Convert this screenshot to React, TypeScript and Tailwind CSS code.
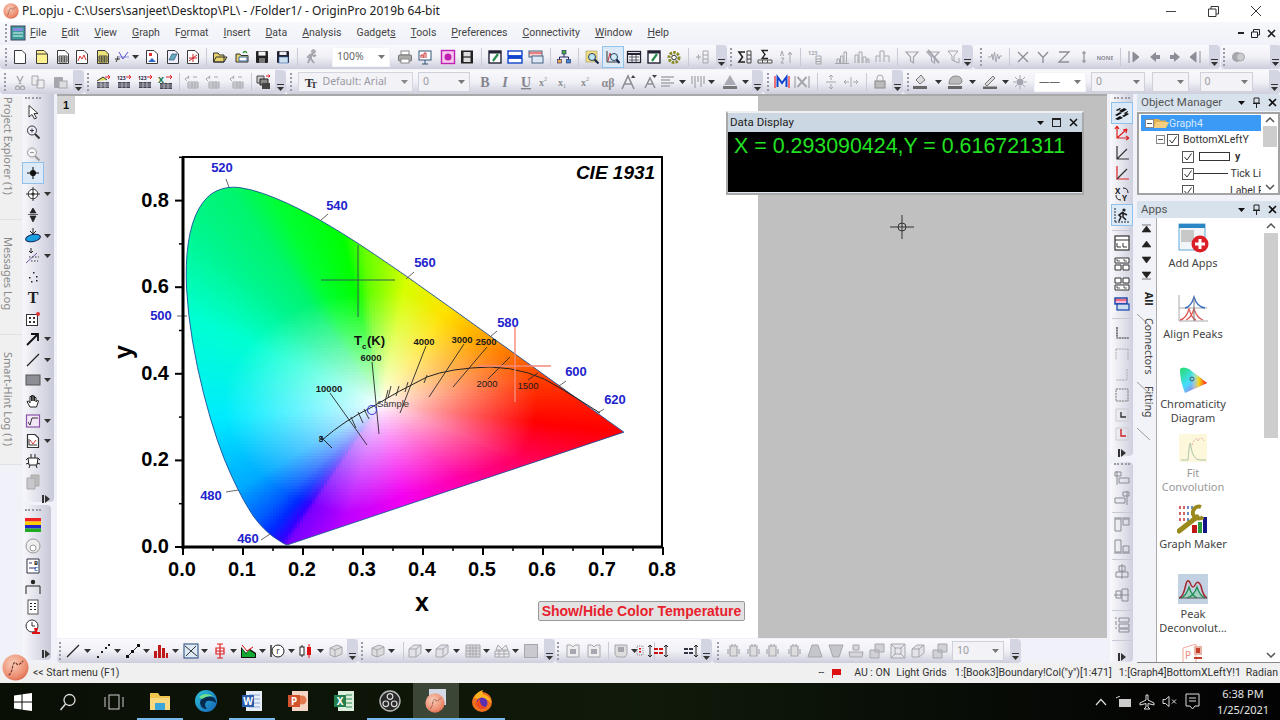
import { ReactNode, useMemo } from "react";

// spectral locus of the CIE 1931 diagram
const LOCUS: [number, number][] = [
  [0.1741, 0.005], [0.1714, 0.0051], [0.1644, 0.0109], [0.1566, 0.0177], [0.144, 0.0297], [0.1241, 0.0578],
  [0.1096, 0.0868], [0.0913, 0.1327], [0.0687, 0.2007], [0.0454, 0.295], [0.0235, 0.4127], [0.0082, 0.5384],
  [0.0039, 0.6548], [0.0139, 0.7502], [0.0389, 0.812], [0.0743, 0.8338], [0.1142, 0.8262], [0.1547, 0.8059],
  [0.1929, 0.7816], [0.2296, 0.7543], [0.2658, 0.7243], [0.3016, 0.6923], [0.3373, 0.6589], [0.3731, 0.6245],
  [0.4087, 0.5896], [0.4441, 0.5547], [0.4788, 0.5202], [0.5125, 0.4866], [0.5448, 0.4544], [0.5752, 0.4242],
  [0.6029, 0.3965], [0.627, 0.3725], [0.6658, 0.334], [0.6915, 0.3083], [0.7079, 0.292], [0.719, 0.2809], [0.7347, 0.2653],
];
const px = (x: number) => 183 + x * 600;
const py = (y: number) => 547 - y * 433;

function inPoly(x: number, y: number, poly: [number, number][]) {
  let hit = false;
  for (let i = 0, j = poly.length - 1; i < poly.length; j = i++) {
    const [xi, yi] = poly[i];
    const [xj, yj] = poly[j];
    if (yi > y !== yj > y && x < ((xj - xi) * (y - yi)) / (yj - yi) + xi) hit = !hit;
  }
  return hit;
}

// rim colours read off the picture, looked up by the angle round the white point
const RIM = ([
  [0.7347, 0.2653, 255, 0, 0], [0.627, 0.3725, 255, 50, 0], [0.5125, 0.4866, 255, 160, 0], [0.4441, 0.5547, 255, 225, 0],
  [0.3731, 0.6245, 215, 255, 0], [0.3016, 0.6923, 100, 255, 0], [0.2658, 0.7243, 0, 255, 0], [0.1547, 0.8059, 0, 255, 50],
  [0.0743, 0.8338, 0, 245, 110], [0.0139, 0.7502, 0, 245, 140], [0.0039, 0.6548, 0, 250, 170], [0.0082, 0.5384, 0, 255, 210],
  [0.0454, 0.295, 0, 235, 255], [0.0913, 0.1327, 0, 170, 255], [0.1241, 0.0578, 0, 90, 255], [0.144, 0.0297, 0, 40, 255],
  [0.1644, 0.0109, 50, 0, 255], [0.1741, 0.005, 120, 0, 255], [0.27, 0.05, 190, 0, 255], [0.37, 0.096, 245, 0, 240],
  [0.47, 0.142, 255, 0, 170], [0.57, 0.189, 255, 0, 100], [0.66, 0.231, 255, 0, 40],
] as number[][])
  .map(([x, y, r, g, b]) => ({ a: (Math.atan2(y - 0.33, x - 0.33) + Math.PI * 2) % (Math.PI * 2), d: Math.hypot(x - 0.33, y - 0.33), c: [r, g, b] }))
  .sort((p, q) => p.a - q.a);

function shoeColor(x: number, y: number) {
  const a = (Math.atan2(y - 0.33, x - 0.33) + Math.PI * 2) % (Math.PI * 2);
  let i = RIM.findIndex((p) => p.a > a);
  if (i < 0) i = 0;
  const hi = RIM[i];
  const lo = RIM[(i - 1 + RIM.length) % RIM.length];
  const span = (hi.a - lo.a + Math.PI * 2) % (Math.PI * 2);
  const f = ((a - lo.a + Math.PI * 2) % (Math.PI * 2)) / span;
  const R = lo.d + (hi.d - lo.d) * f;
  const s = Math.min(1, Math.pow(Math.hypot(x - 0.33, y - 0.33) / Math.min(R * 0.9, 0.26), 0.85));
  const [r, g, b] = lo.c.map((v, n) => {
    const m = v + (hi.c[n] - v) * f;
    return Math.round(255 + (m - 255) * s);
  });
  return `rgb(${r},${g},${b})`;
}

function Horseshoe() {
  const cells = useMemo(() => {
    const out: { x: number; y: number; c: string }[] = [];
    const poly = LOCUS.map(([a, b]): [number, number] => [px(a), py(b)]);
    const step = 3;
    for (let sx = 180; sx < 628; sx += step) {
      for (let sy = 180; sy < 549; sy += step) {
        const near = [[1.5, 1.5], [5, 1.5], [-2, 1.5], [1.5, 5], [1.5, -2]].some(([u, v]) => inPoly(sx + u, sy + v, poly));
        if (near) out.push({ x: sx, y: sy, c: shoeColor((sx + 1.5 - 183) / 600, (547 - sy - 1.5) / 433) });
      }
    }
    return out;
  }, []);
  const pts = LOCUS.map(([a, b]) => [px(a), py(b)]);
  let d = `M${pts[0][0]} ${pts[0][1]}`;
  for (let i = 1; i < pts.length - 1; i++) {
    d += ` Q${pts[i][0].toFixed(1)} ${pts[i][1].toFixed(1)} ${((pts[i][0] + pts[i + 1][0]) / 2).toFixed(1)} ${((pts[i][1] + pts[i + 1][1]) / 2).toFixed(1)}`;
  }
  d += ` L${pts[pts.length - 1][0]} ${pts[pts.length - 1][1]}Z`;
  return (
    <>
      <clipPath id="shoe"><path d={d} /></clipPath>
      <g clipPath="url(#shoe)" shapeRendering="crispEdges">
        {cells.map((c) => <rect key={`${c.x}-${c.y}`} x={c.x} y={c.y} width={3.4} height={3.4} fill={c.c} />)}
      </g>
      <path d={d} fill="none" stroke="#1c4f9a" strokeWidth={0.9} />
    </>
  );
}

function Chart() {
  const waves: [string, number, number, number, number, number, number][] = [
    ["520", 222, 172, 226, 179, 229, 187],
    ["540", 337, 210, 328, 214, 321, 220],
    ["560", 425, 267, 414, 272, 406, 279],
    ["580", 508, 327, 497, 331, 490, 337],
    ["600", 576, 376, 566, 381, 559, 386],
    ["620", 615, 404, 604, 409, 596, 414],
    ["500", 161, 320, 177, 316, 187, 316],
    ["480", 211, 500, 226, 492, 238, 490],
    ["460", 248, 543, 261, 540, 270, 534],
  ];
  const iso: [number, number, number, number][] = [
    [330, 393, 367, 445], [372, 362, 379, 434], [426, 346, 400, 413], [464, 344, 429, 397], [487, 347, 453, 387], [510, 357, 488, 379], [538, 373, 528, 380],
    [351, 417, 356, 428], [358, 412, 363, 423], [364, 409, 369, 419], [388, 390, 385, 402], [391, 386, 388, 398], [399, 386, 396, 396], [408, 382, 405, 392], [427, 375, 424, 383],
  ];
  const xTicks = [0, 0.1, 0.2, 0.3, 0.4, 0.5, 0.6, 0.7, 0.8];
  const yTicks = [0, 0.2, 0.4, 0.6, 0.8];
  return (
    <svg viewBox="57 96 701 542" className="h-full w-full" fontFamily="'Liberation Sans', Arial, sans-serif">
      <Horseshoe />
      <path d="M322 440 Q345 420 372 407 Q400 390 427 377 Q450 368 490 367 Q530 368 560 388 Q580 400 600 413" fill="none" stroke="#222" strokeWidth={1} />
      <path d="M320 436 L332 448" stroke="#222" strokeWidth={1} />
      {iso.map(([a, b, c, e]) => <line key={`${a}${b}`} x1={a} y1={b} x2={c} y2={e} stroke="#2a2a2a" strokeWidth={0.9} />)}
      {/* cursors */}
      <path d="M358 245V317M321 280H395" stroke="#2f5a50" strokeWidth={1} />
      <path d="M515 326V402M478 366H551" stroke="#f58a7a" strokeWidth={1.4} />
      <circle cx={372} cy={410} r={4.5} fill="none" stroke="#3c3ccf" strokeWidth={1.2} />
      {waves.map(([t, x, y, a, b, c, e]) => (
        <g key={t}>
          <line x1={a} y1={b} x2={c} y2={e} stroke="#555" strokeWidth={0.9} />
          <text x={x} y={y} textAnchor="middle" fontSize={13} fontWeight={700} fill="#2222cc">{t}</text>
        </g>
      ))}
      <text x={354} y={345} fontSize={13} fontWeight={700} fill="#111">T</text>
      <text x={362} y={349} fontSize={8} fontWeight={700} fill="#111">c</text>
      <text x={367} y={345} fontSize={13} fontWeight={700} fill="#111">(K)</text>
      {[["6000", 371, 361], ["10000", 329, 392], ["4000", 424, 345], ["3000", 462, 343], ["2500", 486, 345], ["2000", 487, 387], ["1500", 528, 389]].map(([t, x, y]) => (
        <text key={t as string} x={x} y={y} textAnchor="middle" fontSize={9.5} fontWeight={t === "2000" || t === "1500" ? 400 : 700} fill="#1a1a1a">{t}</text>
      ))}
      <text x={393} y={407} textAnchor="middle" fontSize={9.5} fill="#333">Sample</text>
      <text transform="translate(318 439) rotate(90)" textAnchor="middle" fontSize={10} fontWeight={700} fill="#111">∞</text>

      <path d="M183 547V157H662V547" fill="none" stroke="#000" strokeWidth={2} />
      <path d="M181.5 547H663M183 157V549" fill="none" stroke="#000" strokeWidth={3} />
      {xTicks.map((v) => (
        <g key={v}>
          <line x1={px(v)} y1={547} x2={px(v)} y2={555} stroke="#000" strokeWidth={2} />
          {v < 0.8 && <line x1={px(v + 0.05)} y1={547} x2={px(v + 0.05)} y2={551} stroke="#000" strokeWidth={1.5} />}
          <text x={px(v) - 1} y={576} textAnchor="middle" fontSize={20} fontWeight={700} fill="#000">{v.toFixed(1)}</text>
        </g>
      ))}
      {yTicks.map((v) => (
        <g key={v}>
          <line x1={175} y1={py(v)} x2={183} y2={py(v)} stroke="#000" strokeWidth={2} />
          <line x1={179} y1={py(v + 0.1)} x2={183} y2={py(v + 0.1)} stroke="#000" strokeWidth={1.5} />
          <text x={169} y={py(v) + 6} textAnchor="end" fontSize={20} fontWeight={700} fill="#000">{v.toFixed(1)}</text>
        </g>
      ))}
      <text x={422} y={611} textAnchor="middle" fontSize={25} fontWeight={700} fill="#000">x</text>
      <text transform="translate(132 352) rotate(-90)" textAnchor="middle" fontSize={25} fontWeight={700} fill="#000">y</text>
      <text x={615.5} y={179} textAnchor="middle" fontSize={19} fontWeight={700} fontStyle="italic" fill="#000">CIE 1931</text>
    </svg>
  );
}

const GR = "#a6a7ae";
const DK = "#3a3a3a";

function glyph(k: string): ReactNode {
  const page = (fill = "#fff", s = DK) => <path d="M2.5 1.5H10L13.5 5V14.5H2.5Z" fill={fill} stroke={s} />;
  const grid = (c = DK) => <path d="M4 7H12V13H4ZM4 9H12M4 11H12M6.7 7V13M9.3 7V13" fill="none" stroke={c} strokeWidth={0.9} />;
  switch (k) {
    case "doc": return page();
    case "fold": return <>{page("#fff090")}<path d="M3 5H13" stroke={DK} /></>;
    case "grid": return <>{page()}{grid()}</>;
    case "gdoc": return <>{page()}<path d="M4 12L6 7L8 10L10 6L12 11" fill="none" stroke="#d33" /></>;
    case "ygrid": return <>{page("#eee27a")}{grid()}</>;
    case "fx": return <><path d="M2 13Q4 10 4 7M1 10H6" stroke={DK} fill="none" /><path d="M5 3L9 10L14 3" stroke="#55c" fill="none" /><path d="M5 8H15" stroke="#55c" strokeWidth={0.6} /></>;
    case "cdoc": return <>{page()}<path d="M5 4H8V7H5Z" fill="#d33" /><path d="M4 13L8 9L12 13Z" fill="#36c" /></>;
    case "nb": return <>{page("#eef")}<path d="M4 11L7 5H12L9 11Z" fill="#6ab" stroke="#246" strokeWidth={0.6} /></>;
    case "xdoc": return <>{page()}<path d="M4 12L12 6M8 5V13M4 9H12" stroke="#c22" /></>;
    case "open": return <path d="M1.5 13V4H6L7.5 6H12V13ZM1.5 13L4 8H15L12 13Z" fill="#e8d36a" stroke="#333" />;
    case "open2": return <><path d="M2 13V5H6L7 6.5H14V13Z" fill="#e8d36a" stroke="#333" /><path d="M5 12V8H13V12Z" fill="#fff" stroke="#36a" /><path d="M9 4Q11 1 13 4" fill="none" stroke="#2a8a2a" strokeWidth={1.3} /></>;
    case "save": return <><rect x="2" y="2" width="12" height="12" rx="1" fill="#222" /><rect x="4.5" y="2.6" width="7" height="4" fill="#f4f4f4" /><rect x="5" y="9" width="6" height="5" fill="#777" /></>;
    case "save2": return <><rect x="2" y="2" width="12" height="12" rx="1" fill="#223" /><rect x="4.5" y="2.6" width="7" height="3.4" fill="#eee" /><rect x="4" y="8" width="9" height="6" fill="#cde" stroke="#36a" strokeWidth={0.6} /></>;
    case "run": return <path d="M9 2.5a1.4 1.4 0 1 1 0 .1M8 5L5 8L7 9L5 14M8 5L11 7L13 6M8 5L8 10L11 14" fill="none" stroke={GR} strokeWidth={2} />;
    case "print": return <><rect x="4" y="2" width="8" height="4" fill="#fff" stroke="#888" /><rect x="1.5" y="6" width="13" height="6" rx="1" fill="#aaa" stroke="#777" /><rect x="4" y="10" width="8" height="4" fill="#fff" stroke="#888" /></>;
    case "slide": return <><rect x="2" y="2" width="12" height="9" fill="#fff" stroke="#357" /><path d="M4 9V6H6V9M7 9V4H9V9" stroke="#c33" fill="none" /><path d="M8 11V15M5 15H11" stroke="#357" /></>;
    case "mag": return <><rect x="1.5" y="1.5" width="13" height="13" fill="#f7c8ef" stroke="#c020b0" strokeWidth={1.4} /><circle cx="8" cy="8" r="3.5" fill="#c020b0" /></>;
    case "film": return <><rect x="2" y="1.5" width="12" height="13" fill="#222" /><rect x="4.5" y="3" width="7" height="4.4" fill="#ddd" /><rect x="4.5" y="8.6" width="7" height="4.4" fill="#ddd" /></>;
    case "note": return <><rect x="2" y="2" width="12" height="12" fill="#fff" stroke="#223" strokeWidth={1.4} /><rect x="2" y="2" width="12" height="2.5" fill="#223" /><path d="M6 12L11 5" stroke="#2a8a50" strokeWidth={2.2} /></>;
    case "lines": return <><rect x="1" y="2" width="14" height="5" fill="#fff" stroke="#14c" strokeWidth={1.4} /><rect x="1" y="9" width="14" height="5" fill="#fff" stroke="#14c" strokeWidth={1.4} /><rect x="1" y="6.3" width="14" height="3.4" fill="#14c" /></>;
    case "wins": return <><rect x="1" y="2" width="13" height="6" fill="#f8cfd0" stroke="#468" /><path d="M1 4H14" stroke="#d33" /><rect x="4" y="7" width="11" height="7" fill="#dde8f4" stroke="#468" /></>;
    case "net": return <><rect x="6" y="1.5" width="4" height="3.5" fill="#4a4" stroke="#226" strokeWidth={0.6} /><rect x="1.5" y="10.5" width="4" height="3.5" fill="#ea4" stroke="#226" strokeWidth={0.6} /><rect x="10.5" y="10.5" width="4" height="3.5" fill="#48c" stroke="#226" strokeWidth={0.6} /><path d="M8 5V8M3.5 10.5V8H12.5V10.5" fill="none" stroke="#226" /></>;
    case "find": return <><rect x="2" y="2" width="11" height="11" fill="#f3dc7a" stroke="#997" strokeWidth={0.6} /><circle cx="8" cy="8" r="3.5" fill="#bfe4f4" stroke="#246" /><path d="M10.5 10.5L14.5 14.5" stroke="#124" strokeWidth={2} /></>;
    case "findsel": return <><path d="M2 2V13H13" stroke="#333" fill="none" /><path d="M3 12L5 4L7 10" stroke="#c33" fill="none" /><circle cx="9" cy="8" r="3.5" fill="#d3ecf6" stroke="#246" /><path d="M11.5 10.5L14.5 14" stroke="#124" strokeWidth={2} /></>;
    case "table": return <><rect x="1.5" y="2.5" width="13" height="11" fill="#fff" stroke="#223" strokeWidth={1.3} /><path d="M1.5 5H14.5" stroke="#223" strokeWidth={2} /><path d="M3 8H13M3 11H13M6 6V13M10 6V13" stroke="#556" /></>;
    case "gear": return <><circle cx="8" cy="8.5" r="5" fill="none" stroke="#8a8a22" strokeWidth={3} strokeDasharray="2.5 1.2" /><circle cx="8" cy="8.5" r="2.3" fill="#fff" stroke="#333" /></>;
    case "addcol": return <path d="M1 8H6M3.5 5.5V10.5M8 2H13V14H8ZM8 6H13M8 10H13" fill="none" stroke={GR} />;
    case "sum": return <><path d="M8 3H2L5.5 8L2 13H8" fill="none" stroke="#222" strokeWidth={1.6} /><path d="M10 2H14V14H10ZM10 6H14M10 10H14" fill="none" stroke="#444" /></>;
    case "sum2": return <><path d="M11 1.5H5L8 5.5L5 9.5H11" fill="none" stroke="#222" strokeWidth={1.3} /><path d="M1 14H15V11H1ZM5.5 11V14M10.5 11V14" fill="#eee" stroke="#555" /></>;
    case "sort": return <path d="M3 2L1.5 7M3 2L4.5 7M2 9H5L2 14H5M11 3V14M11 3L9 6M11 3L13 6" fill="none" stroke={GR} />;
    case "n123": return <><text x="1" y="6" fontSize="5.5" fontWeight="700" fill={GR}>123</text><path d="M9 7H14V15H9ZM9 10H14M9 12.5H14" fill="none" stroke={GR} /></>;
    case "bars": return <path d="M3 14V10H5.5V14M6.5 14V7H9V14M10 14V3H12.5V14M1 14.5H15" fill="none" stroke={GR} />;
    case "bars2": return <path d="M1 14V6H4V14M5 14V3H8V14M9 14V8H12V14M13 14V10H15V14" fill="none" stroke={GR} />;
    case "steps": return <path d="M1 13V7H5V2H9V7H14V13M5 13V7M9 13V7" fill="none" stroke={GR} />;
    case "funnel": return <path d="M2 3H14L9.5 8V14L6.5 12V8Z" fill="none" stroke={GR} strokeWidth={1.2} />;
    case "funnelx": return <><path d="M2 3H14L9.5 8V14L6.5 12V8Z" fill="none" stroke={GR} strokeWidth={1.2} /><path d="M3 1L14 14" stroke={GR} strokeWidth={2} /></>;
    case "funnelr": return <><path d="M3 2H13L9 7V12L7 11V7Z" fill="none" stroke={GR} /><path d="M9 12L14 14M14 9V14" stroke={GR} /></>;
    case "wave": return <path d="M1 8H4L5 5L6 11L7.5 3L9 13L10.5 5L12 10L13 7H15" fill="none" stroke={GR} />;
    case "X": return <path d="M3 3L13 13M13 3L3 13" stroke="#8d8e95" strokeWidth={1.3} />;
    case "Y": return <path d="M3 3L8 8.5L13 3M8 8.5V14" fill="none" stroke="#8d8e95" strokeWidth={1.3} />;
    case "Z": return <path d="M3 3H13L3 13H13" fill="none" stroke="#8d8e95" strokeWidth={1.3} />;
    case "i": return <path d="M8 2V14M6 4H10M6 12H10" stroke="#8d8e95" strokeWidth={1.2} />;
    case "none": return <text x="8" y="10.5" textAnchor="middle" fontSize="5.8" fontWeight="700" fill="#8d8e95">NONE</text>;
    case "first": return <path d="M3 2V14M13 8L7 3V13Z" transform="rotate(0)" fill="#8d8e95" stroke="#8d8e95" />;
    case "prev": return <path d="M3 8L9 3V13ZM9 6H13V10H9Z" fill="#8d8e95" />;
    case "next": return <path d="M13 8L7 3V13ZM7 6H3V10H7Z" fill="#8d8e95" />;
    case "last": return <path d="M13 2V14M3 8L9 3V13Z" fill="#8d8e95" stroke="#8d8e95" />;
    case "dot": return <><circle cx="7" cy="8" r="5" fill={GR} /><circle cx="10.5" cy="8" r="4" fill="#ccc" stroke={GR} /></>;
    case "cut": return <path d="M5 2L9 10M11 2L7 10M5.5 12a2 2 0 1 0 .1 0M10.5 12a2 2 0 1 0 .1 0" fill="none" stroke={GR} strokeWidth={1.4} />;
    case "copy": return <path d="M2 2H8V11H2ZM7 6H14V14H7Z" fill="#eee" stroke={GR} />;
    case "paste": return <><rect x="2" y="3" width="9" height="11" rx="1" fill={GR} /><rect x="7" y="7" width="8" height="7" fill="#ddd" stroke={GR} /></>;
    case "imp": return <><path d="M2 7L8 3L12 6" fill="#dd5" stroke="#333" /><path d="M10 3H15M13 1L15 3L13 5" stroke="#d22" fill="none" /><path d="M2 8H14V14H2Z" fill="#556" /><path d="M2 10H14M2 12H14M6 8V14M10 8V14" stroke="#fff" strokeWidth={0.5} /></>;
    case "imp1": return <><text x="1" y="6" fontSize="5" fontWeight="700" fill="#224">123</text><path d="M10 3H15M13 1L15 3L13 5" stroke="#d22" fill="none" /><path d="M2 8H14V14H2Z" fill="#445" /><path d="M2 10H14M2 12H14M6 8V14M10 8V14" stroke="#fff" strokeWidth={0.5} /></>;
    case "impx": return <><text x="1" y="9" fontSize="9" fontWeight="700" fill="#167a46">X</text><path d="M9 3H15M13 1L15 3L13 5" stroke="#d22" fill="none" /><path d="M3 9H15V15H3Z" fill="#445" /><path d="M3 11H15M3 13H15M7 9V15M11 9V15" stroke="#fff" strokeWidth={0.5} /></>;
    case "tg": return <><path d="M1 5L5 2M5 2L4 5M1 5L3 7" stroke={GR} fill="none" /><path d="M4 8H14V14H4ZM4 10H14M4 12H14M8 8V14M11 8V14" fill="none" stroke={GR} /><path d="M9 3H13" stroke={GR} /></>;
    case "cp": return <><path d="M2 2H9V9H2Z" fill="#ccc" stroke="#444" /><path d="M5 5H13V11H5Z" fill="#888" stroke="#222" /><path d="M7 9H15V15H7Z" fill="#444" /><path d="M11 2H15M13.5 .5L15 2L13.5 3.5" stroke="#d22" fill="none" /></>;
    case "tfont": return <><text x="6" y="13" textAnchor="middle" fontSize="13" fontWeight="700" fontFamily="'Liberation Serif', serif" fill="#333">T</text><text x="11" y="14" textAnchor="middle" fontSize="9" fontWeight="700" fontFamily="'Liberation Serif', serif" fill="#333">T</text></>;
    case "B": case "I": case "U": return <text x="8" y="13" textAnchor="middle" fontSize="14" fontWeight="700" fontStyle={k === "I" ? "italic" : "normal"} fontFamily="'Liberation Serif', serif" fill="#83848c" textDecoration={k === "U" ? "underline" : "none"}>{k}</text>;
    case "sup": case "sub": case "supsub": return <text x="1" y="12" fontSize="10" fontWeight="700" fontFamily="'Liberation Serif', serif" fill="#8d8e95">x<tspan fontSize="6" dy={k === "sub" ? 2 : -5} fontWeight="400">{k === "sub" ? "1" : "2"}</tspan></text>;
    case "ab": return <text x="8" y="13" textAnchor="middle" fontSize="12" fontWeight="700" fontFamily="'Liberation Serif', serif" fill="#8d8e95">αβ</text>;
    case "Aup": return <><path d="M1 15L7 2L13 15M3.5 10H10.5" fill="none" stroke="#8d8e95" strokeWidth={1.6} /><path d="M12 1L14.5 4H10Z" fill="#444" /></>;
    case "Adn": return <><path d="M3 14L8 4L13 14M5 10H11" fill="none" stroke="#8d8e95" strokeWidth={1.5} /><path d="M10 1H15L12.5 4Z" fill="#444" /></>;
    case "align": return <path d="M1 3H14M1 6H10M1 9H14M1 12H10" stroke={GR} strokeWidth={1.4} />;
    case "cols": return <path d="M2 2V10M5 2V14M8 2V8M11 2V13M14 2V10" stroke={GR} strokeWidth={1.3} />;
    case "Acol": return <><path d="M8 1L14 11H2Z" fill="#a9aab2" /><rect x="1" y="12" width="14" height="3" fill="#777" /></>;
    case "M": return <><path d="M1 2V14M15 2V14" stroke="#e33" strokeWidth={1.3} /><path d="M3.5 13V3L8 9L12.5 3V13" fill="none" stroke="#14c" strokeWidth={2} /></>;
    case "MX": return <><path d="M1 2V14M15 2V14" stroke={GR} strokeWidth={1.3} /><path d="M3.5 3L12.5 13M12.5 3L3.5 13" stroke={GR} strokeWidth={2} /></>;
    case "ud": return <path d="M8 1V6M8 10V15M6 3L8 1L10 3M6 13L8 15L10 13M3 8H13" fill="none" stroke={GR} />;
    case "lr": return <path d="M1 8H6M10 8H15M3 6L1 8L3 10M13 6L15 8L13 10M8 3V13" fill="none" stroke={GR} />;
    case "lock": return <><path d="M5 7V4a3 3 0 0 1 6 0V7" fill="none" stroke={GR} /><rect x="3" y="7" width="10" height="7" fill="#bbb" stroke="#888" /></>;
    case "fillc": return <><path d="M4 6L9 1L13 6L8 10Z" fill="#ddd" stroke="#777" /><rect x="1" y="12" width="14" height="3" fill="#666" /></>;
    case "pat": return <><path d="M2 10Q2 2 9 2Q15 2 15 8L13 10Z" fill="#bbb" stroke="#888" /><rect x="1" y="12" width="14" height="3" fill="#666" /></>;
    case "penc": return <><path d="M3 10L11 2L13 4L5 12Z" fill="#ddd" stroke="#777" /><rect x="1" y="12.5" width="14" height="2.5" fill="#666" /></>;
    case "sun": return <><circle cx="8" cy="8" r="3.5" fill={GR} /><path d="M8 1V4M8 12V15M1 8H4M12 8H15M3 3L5 5M11 11L13 13M13 3L11 5M3 13L5 11" stroke={GR} /></>;
    // left toolbar
    case "arrow": return <path d="M4 1.5V13L7 10.5L9.5 15L11.5 14L9 9.5H13Z" fill="#fff" stroke="#333" />;
    case "zoomin": return <><circle cx="7" cy="6.5" r="4.5" fill="#eef" stroke="#333" /><path d="M10 10L14.5 14.5" stroke="#333" strokeWidth={2} /><path d="M5 6.5H9M7 4.5V8.5" stroke="#333" /></>;
    case "zoomout": return <><circle cx="7" cy="6.5" r="4.5" fill="#f4f4f8" stroke="#999" /><path d="M10 10L14.5 14.5" stroke="#999" strokeWidth={2} /><path d="M5 6.5H9" stroke="#999" /></>;
    case "cross": return <path d="M8 2V14M2 8H14M5.5 8a2.5 2.5 0 1 0 5 0a2.5 2.5 0 1 0 -5 0" fill="#111" stroke="#111" strokeWidth={1.1} />;
    case "target": return <><circle cx="8" cy="8" r="4.8" fill="#fff" stroke="#333" /><path d="M8 1V15M1 8H15" stroke="#333" /><circle cx="8" cy="8" r="1.6" fill="#333" /></>;
    case "updn": return <path d="M8 1L5 6H11ZM8 15L5 9H11ZM3 7.5H13" fill="#222" stroke="#222" strokeWidth={0.7} />;
    case "ell": return <><path d="M8 0V6M5 3L8 6L11 3" stroke="#222" fill="none" /><ellipse cx="8" cy="10" rx="7.5" ry="3.5" transform="rotate(-12 8 10)" fill="#1aa0e0" stroke="#125" /></>;
    case "fit": return <><path d="M6 0V5M4 3L6 5L8 3" stroke="#222" fill="none" /><path d="M1 15L12 5" stroke="#75a" /><path d="M4 9H14M6 13H13" stroke="#333" strokeDasharray="1.5 1.5" /></>;
    case "pts": return <path d="M8 3h1.5v1.5H8ZM4 8h1.5v1.5H4ZM11 7h1.5v1.5H11ZM11 11h1.5v1.5H11ZM6 12h1.5v1.5H6Z" fill="#222" />;
    case "T": return <text x="8" y="14" textAnchor="middle" fontSize="16" fontWeight="700" fontFamily="'Liberation Serif', serif" fill="#222">T</text>;
    case "rs": return <><rect x="1.5" y="3.5" width="11" height="11" fill="#fff" stroke="#333" /><path d="M4 6H6V8H4ZM8 6H10V8H8ZM4 10H6V12H4ZM8 10H10V12H8Z" fill="#333" /><circle cx="13" cy="3" r="2" fill="#d33" /></>;
    case "arrowup": return <path d="M2 14L13 3M6 3H13V10" fill="none" stroke="#111" strokeWidth={1.8} />;
    case "line": return <path d="M2 14L14 2" stroke="#222" strokeWidth={1.2} />;
    case "rect": return <rect x="1" y="3" width="14" height="10" fill="#8d8e95" stroke="#555" />;
    case "hand": return <path d="M5 14L2 8.5L3.5 8L5 10V3.5H6.5V8V2.5H8V8V3H9.5V8V4.5H11V9L12.5 7L13.5 8L11.5 14Z" fill="#fff" stroke="#222" />;
    case "sqrt": return <><rect x="1.5" y="2" width="13" height="12" fill="#f3e6f6" stroke="#85a" strokeWidth={1.2} /><path d="M3 9L5 12L7 5H13" fill="none" stroke="#333" /></>;
    case "gred": return <><path d="M2.5 1.5H10L13.5 5V14.5H2.5Z" fill="#fff" stroke="#333" strokeWidth={1.2} /><path d="M4 6V12H12" stroke="#333" fill="none" /><path d="M5 7L8 11L11 7" fill="none" stroke="#d33" /></>;
    case "mask": return <><path d="M3 5H13L12 12H4Z" fill="#fff" stroke="#222" /><path d="M1 7L3 5M15 7L13 5M1 11L4 10M15 11L12 10M6 1L6 5M10 1L10 5M5 12L4 15M11 12L12 15" stroke="#222" /></>;
    case "sheet": return <><path d="M6 1H14V12H6Z" fill="#bbb" stroke="#aaa" /><path d="M2 4H10V15H2Z" fill="#c8c8cc" stroke="#aaa" /></>;
    case "rainbow": return <><rect x="0" y="1" width="16" height="3.5" fill="#e22" /><rect x="0" y="4.5" width="16" height="3.5" fill="#fc0" /><rect x="0" y="8" width="16" height="3.5" fill="#22c" /><rect x="0" y="11.5" width="16" height="3.5" fill="#2a2" /></>;
    case "ring": return <><circle cx="8" cy="8" r="7" fill="#eee" stroke="#999" /><circle cx="8" cy="10" r="3" fill="#fff" stroke="#999" /></>;
    case "bc": return <><path d="M2 1H14V15H2Z" fill="#fff" stroke="#334" /><path d="M4 5H7M4 10H11" stroke="#336" /><text x="9" y="7" fontSize="6" fontWeight="700" fill="#222">B</text><text x="9" y="13" fontSize="6" fontWeight="700" fill="#36c">C</text></>;
    case "bracket": return <><circle cx="8" cy="3" r="2.2" fill="#222" /><path d="M1 15V7H15V15" fill="none" stroke="#222" /></>;
    case "dots": return <><rect x="3" y="1" width="10" height="14" fill="#fff" stroke="#555" /><path d="M5 4h2v1H5ZM9 4h2v1H9ZM5 7h2v1H5ZM9 7h2v1H9ZM5 10h2v1H5ZM9 10h2v1H9Z" fill="#222" /></>;
    case "clock": return <><circle cx="7" cy="7" r="6" fill="#fff" stroke="#333" /><path d="M7 3V7H10" stroke="#333" fill="none" /><path d="M7 13H15V15H7ZM9 9H13L12 13H10Z" fill="#d11" /></>;
    // bottom toolbar
    case "scat": return <path d="M2 13h2v2H2ZM6 8h2v2H6ZM10 4h2v2H10ZM13 1h2v2H13Z" fill="#222" />;
    case "lsym": return <><path d="M2 14L14 2" stroke="#222" /><path d="M1 12h3v3H1ZM6 7h3v3H6ZM12 1h3v3H12Z" fill="#111" /></>;
    case "col": return <path d="M1 15V8H4V15ZM5 15V2H8V15ZM9 15V5H12V15ZM13 15V10H15V15Z" fill="#c01818" />;
    case "xyline": return <><rect x="1" y="1" width="14" height="14" fill="#dfeaf7" stroke="#247" /><path d="M2 3L14 13M3 13L13 3" stroke="#333" /></>;
    case "box": return <path d="M8 1V15M5 1H11M5 15H11M4 5H12V11H4ZM4 8H12" fill="none" stroke="#d22" strokeWidth={1.2} />;
    case "area": return <><path d="M0 15V4L5 10L9 6L15 10V15Z" fill="#111" /><path d="M1 6L5 11L8 7L14 11V14H1Z" fill="#1a3" /><path d="M1 2L6 8L12 4" stroke="#d11" fill="none" /></>;
    case "ror": return <><path d="M2 2V14" stroke="#222" strokeWidth={1.4} /><circle cx="9" cy="8" r="6" fill="#fff" stroke="#222" /><text x="9" y="11" textAnchor="middle" fontSize="8" fill="#222">r</text></>;
    case "cand": return <><path d="M4 2V14" stroke="#222" /><rect x="2" y="4" width="4" height="8" fill="#fff" stroke="#222" /><path d="M11 1V15" stroke="#d11" /><rect x="9" y="4" width="4" height="8" fill="#d11" /></>;
    case "plane": return <path d="M2 5L9 2L14 4V11L7 14L2 12ZM2 5L7 7V14M7 7L14 4" fill="#ddd" stroke={GR} />;
    case "cube": return <path d="M2 6L7 2H14V10L9 14H2ZM2 6H9V14M9 6L14 2" fill="#e2e2e8" stroke={GR} />;
    case "wall": return <path d="M1 2H15V14H1ZM1 5H15M1 8H15M1 11H15M5 2V14M8 2V14M11 2V14" fill="#ddd" stroke={GR} />;
    case "walls": return <path d="M1 8H15V14H1ZM1 11H15M5 8V14M10 8V14M2 7L4 2L8 6L12 2L14 7Z" fill="#eee" stroke={GR} />;
    case "sq": return <rect x="1.5" y="1.5" width="13" height="13" fill="#c9c9cf" stroke={GR} />;
    case "face": return <><path d="M2 2H6L8 4L10 2H14V14H2Z" fill="#eee" stroke={GR} /><rect x="5" y="6" width="6" height="5" fill={GR} /></>;
    case "face2": return <><path d="M2 2H14V11L12 14H4L2 11Z" fill="#ddd" stroke={GR} /><rect x="5" y="4" width="6" height="5" fill={GR} /></>;
    case "red1": return <><path d="M1 3H7V12H1Z" fill="none" stroke="#888" strokeDasharray="1 1" /><path d="M3 5h2v1.5H3ZM3 8h2v1.5H3Z" fill="#d11" /><path d="M14 2V14M12 4L14 2L16 4M12 12L14 14L16 12" stroke="#222" fill="none" /></>;
    case "red2": return <><path d="M2 5h4v2H2ZM7 5h4v2H7ZM2 9h4v2H2ZM7 9h4v2H7Z" fill="#c11" /><path d="M14 2V14M12 4L14 2L16 4M12 12L14 14L16 12" stroke="#222" fill="none" /></>;
    case "red3": return <><path d="M2 5h4v2H2ZM7 5h4v2H7ZM2 9h4v2H2ZM7 9h4v2H7Z" fill="#334" /><path d="M14 2V14M12 4L14 2L16 4M12 12L14 14L16 12" stroke="#222" fill="none" /></>;
    case "rot": return <path d="M4 3H11V13H4ZM2 6V11M13 6V11M6 1V3M9 1V3" fill="#ddd" stroke={GR} strokeWidth={1.2} />;
    case "trap": return <path d="M5 2H11L15 14H1Z" fill="#c5c6cc" stroke={GR} />;
    case "trapd": return <path d="M1 2H15L11 14H5Z" fill="#c5c6cc" stroke={GR} />;
    case "stack": return <path d="M5 2H11V7H5ZM1 9H15L14 14H2Z" fill="#d5d5db" stroke={GR} />;
    case "stack2": return <path d="M6 1H15V9H6ZM1 7H10V15H1Z" fill="#d0d0d6" stroke={GR} />;
    case "focus": return <path d="M1 1H15V15H1ZM1 1L6 6M15 1L10 6M1 15L6 10M15 15L10 10M5 5H11V11H5Z" fill="#e6e6ec" stroke={GR} />;
    // right toolbar
    case "layers": return <path d="M1 10L6 7L8 8L3 11ZM5 6L10 3L13 4.5L8 7.5ZM8 11L13 8L15 9L10 12ZM2 5L6 3L7 4L3 6ZM10 8L14 6V7L11 9ZM1 14L6 11L9 13L4 15Z" fill="#111" />;
    case "axr": return <path d="M3 1V13H15M3 1L1 4M3 1L5 4M15 13L12 11M15 13L12 15M3 13L13 4M13 4L9 5M13 4L12 8" fill="none" stroke="#d22" strokeWidth={1.2} />;
    case "axk": return <path d="M3 1V14H15M3 14L13 4" fill="none" stroke="#333" strokeWidth={1.2} />;
    case "axrk": return <><path d="M3 1V14H15" fill="none" stroke="#d22" strokeWidth={1.2} /><path d="M3 14L13 4" stroke="#333" strokeWidth={1.2} /></>;
    case "swap": return <><text x="1" y="8" fontSize="8" fontWeight="700" fill="#222">X</text><text x="8" y="15" fontSize="8" fontWeight="700" fill="#222">Y</text><path d="M9 2Q14 2 14 7M7 14Q2 14 2 9" fill="none" stroke="#222" /></>;
    case "runfast": return <><path d="M1 15V1M1 15H15" stroke="#222" strokeDasharray="2 1" /><circle cx="10" cy="3" r="1.6" fill="#222" /><path d="M9 5L5 8L7 10L5 14M9 5L9 10L12 13M9 6L13 8" fill="none" stroke="#222" strokeWidth={1.6} /></>;
    case "lay1": return <><rect x="1" y="1" width="14" height="14" fill="#fff" stroke="#333" strokeWidth={1.2} /><path d="M3 8V12H7M9 8V12H13M1 5H15" fill="none" stroke="#333" /></>;
    case "lay2": return <><path d="M1 2H15V7H1ZM1 9H7V14H1ZM9 9H15V14H9Z" fill="#fff" stroke="#333" /><path d="M3 3V5H6M10 3V5H13" fill="none" stroke="#333" strokeWidth={0.8} /></>;
    case "lay3": return <><path d="M1 9H15V14H1ZM1 2H7V7H1ZM9 2H15V7H9Z" fill="#fff" stroke="#333" /><path d="M3 10V12H6M10 10V12H13" fill="none" stroke="#333" strokeWidth={0.8} /></>;
    case "lay4": return <><rect x="1" y="2" width="12" height="6" fill="#fbd" stroke="#14a" strokeWidth={1.4} /><path d="M1 4H13" stroke="#d22" /><rect x="3" y="8" width="12" height="6" fill="#cde" stroke="#14a" strokeWidth={1.2} /></>;
    case "ax1": return <path d="M3 2V13H15" fill="none" stroke="#333" strokeWidth={1.2} strokeDasharray="2 .6" />;
    case "ax2": return <path d="M2 3H14M2 3V14M14 3V14" fill="none" stroke="#aaa" strokeDasharray="2 .8" />;
    case "ax3": return <path d="M13 2V13H2" fill="none" stroke="#aaa" strokeDasharray="2 .8" />;
    case "ax4": return <path d="M2 2H14V14H2Z" fill="none" stroke="#777" strokeDasharray="2 .8" />;
    case "ax5": return <><path d="M2 2H14V14H2Z" fill="none" stroke="#ccc" /><path d="M7 5V10H12" fill="none" stroke="#333" strokeWidth={1.4} /></>;
    case "ax6": return <><path d="M2 2H14V14H2Z" fill="none" stroke="#ccc" /><path d="M7 3V10H12" fill="none" stroke="#c22" strokeWidth={1.4} /></>;
    case "al1": return <path d="M1 2H7V6H1ZM5 8H15V13H5ZM3 1V15" fill="none" stroke="#8a8b92" />;
    case "al2": return <path d="M9 2H15V6H9ZM1 8H11V13H1ZM13 1V15" fill="none" stroke="#8a8b92" />;
    case "al3": return <path d="M1 2H7V14H1ZM9 2H15V8H9ZM0 1H16" fill="none" stroke="#8a8b92" />;
    case "al4": return <path d="M1 2H7V14H1ZM9 8H15V14H9ZM0 15H16" fill="none" stroke="#8a8b92" />;
    case "al5": return <path d="M5 2H11V7H5ZM2 8H14V13H2ZM8 0V15" fill="none" stroke="#8a8b92" />;
    case "al6": return <path d="M2 4H7V11H2ZM8 2H14V14H8ZM0 8H15" fill="none" stroke="#8a8b92" />;
    case "al7": return <path d="M5 1H15V5H5ZM5 7H15V11H5ZM1 1H3M1 5H3M1 7H3M1 11H3M5 12H15V15H5Z" fill="none" stroke="#8a8b92" />;
    default: return null;
  }
}

function Ico({ k, size = 16 }: { k: string; size?: number }) {
  return <svg width={size} height={size} viewBox="0 0 16 16" className="shrink-0">{glyph(k)}</svg>;
}

function Drop({ color = "#333" }: { color?: string }) {
  return <svg width="7" height="4" viewBox="0 0 7 4" className="shrink-0"><path d="M0 0H7L3.5 4Z" fill={color} /></svg>;
}

function Grip({ vertical }: { vertical?: boolean }) {
  return <div className={`border-dotted border-[#9a9aa8] ${vertical ? "h-px w-[16px] border-t-2" : "h-[18px] w-px border-l-2"}`} />;
}

function MoreTri() {
  return <svg width="8" height="8" viewBox="0 0 8 8"><path d="M0 0H2V8H0ZM3 0L8 4L3 8Z" fill="#333" /></svg>;
}

// strip item: [kind, centre on the axis, length, label]; gaps come from the centres
type Item = [string, number, number?, string?];

function Slot({ item, vertical }: { item: Item; vertical?: boolean }) {
  const [k, , , label] = item;
  if (k === "grip") return <Grip vertical={vertical} />;
  if (k === "sep") return <div className={vertical ? "h-px w-[20px] bg-[#c9cad6]" : "h-[18px] w-px bg-[#c9cad6]"} />;
  if (k === "drop") return <Drop />;
  if (k === "tri") return <div className="translate-x-[13px]"><MoreTri /></div>;
  if (k === "tri0") return <MoreTri />;
  if (k === "combo-font") {
    return (
      <div className="flex h-[20px] w-full items-center justify-between border border-[#d4d5df] bg-[#f2f2f7] px-[4px] text-[10.5px] text-[#9a9aa2]">
        <span className="flex items-center gap-[4px] whitespace-nowrap"><Ico k="tfont" />{label}</span>
        <Drop color="#888" />
      </div>
    );
  }
  if (k.startsWith("combo")) {
    const dim = k === "combo-dim";
    return (
      <div className={`flex h-[20px] w-full items-center justify-between border px-[4px] text-[10.5px] ${dim ? "border-[#cfd0da] bg-[#f2f2f7] text-[#9a9aa2]" : "border-[#f4f4f8] bg-white text-[#666]"}`}>
        <span className="whitespace-nowrap">{label}</span>
        <Drop color="#777" />
      </div>
    );
  }
  if (k.endsWith("+")) {
    return (
      <div className="relative">
        <Ico k={k.slice(0, -1)} />
        <div className="absolute left-[19px] top-[6px]"><Drop /></div>
      </div>
    );
  }
  if (k.endsWith("*")) {
    return (
      <div className="flex h-[22px] w-[22px] items-center justify-center border border-[#8fc1ea] bg-[#dceaf7]">
        <Ico k={k.slice(0, -1)} />
      </div>
    );
  }
  return <Ico k={k} />;
}

function Strip({ items, origin, vertical }: { items: Item[]; origin: number; vertical?: boolean }) {
  let pos = origin;
  return (
    <div className={`flex items-center ${vertical ? "flex-col" : "flex-row"}`}>
      {items.map((it) => {
        const [k, c, w] = it;
        const len = w ?? (k === "drop" ? 7 : k === "grip" || k === "sep" ? 2 : k === "tri" || k === "tri0" ? 8 : k.endsWith("*") ? 22 : 16);
        const gap = c - len / 2 - pos;
        pos = c + len / 2;
        return (
          <div
            key={`${k}${c}`}
            className="flex shrink-0 items-center justify-center"
            style={vertical ? { marginTop: gap, height: len } : { marginLeft: gap, width: len }}
          >
            <Slot item={it} vertical={vertical} />
          </div>
        );
      })}
    </div>
  );
}

function Handle() {
  return (
    <div className="flex h-full w-[11px] flex-col items-center justify-end gap-[2px] rounded-r-[4px] bg-[#d4d5e2] pb-[3px]">
      <div className="h-px w-[7px] bg-[#333]" />
      <Drop />
    </div>
  );
}

function Pill({ className, origin, items }: { className: string; origin: number; items: Item[] }) {
  return (
    <div className={`flex h-[24px] shrink-0 items-center justify-between rounded-[4px] bg-gradient-to-b from-[#fafafd] via-[#f0f0f6] to-[#cdcedc] ${className}`}>
      <Strip origin={origin} items={items} />
      <Handle />
    </div>
  );
}

const ROW1A: Item[] = [["grip", 6], ["doc", 20], ["fold", 42], ["grid", 63], ["gdoc", 82], ["ygrid", 103], ["fx", 122], ["drop", 135], ["cdoc", 152], ["nb", 173], ["xdoc", 193], ["sep", 206], ["open", 220], ["open2", 242], ["save", 262], ["save2", 283], ["sep", 297], ["run", 311], ["combo", 361, 58, "100%"], ["print", 405], ["slide", 425], ["mag", 448], ["film", 467], ["sep", 481], ["note", 495], ["lines", 515], ["wins", 536], ["sep", 550], ["net", 564], ["sep", 578], ["find", 592], ["findsel*", 613], ["table", 634], ["note", 654], ["gear", 674], ["sep", 688], ["addcol", 703]];
const ROW1B: Item[] = [["grip", 731], ["sum", 745], ["sum2", 765], ["sort", 787], ["sep", 800], ["n123", 815], ["bars", 842], ["bars2", 862], ["steps", 883], ["sep", 897], ["funnel", 912], ["funnelx", 933], ["funnelr", 953]];
const ROW1C: Item[] = [["grip", 981], ["wave", 995], ["sep", 1009], ["X", 1023], ["Y", 1043], ["Z", 1064], ["i", 1084], ["none", 1105], ["sep", 1120], ["first", 1134], ["prev", 1155], ["next", 1175], ["last", 1195]];
const ROW2A: Item[] = [["grip", 5], ["cut", 20], ["copy", 38], ["paste", 60]];
const ROW2B: Item[] = [["grip", 88], ["imp", 103], ["imp1", 124], ["imp1", 145], ["impx", 165], ["sep", 179], ["tg", 192], ["tg", 213], ["tg", 237], ["sep", 251], ["cp", 263]];
const ROW2C: Item[] = [["grip", 291], ["combo-font", 355, 115, "Default: Arial"], ["combo-dim", 444, 52, "0"], ["B", 485], ["I", 505], ["U", 526], ["sup", 546], ["sub", 565], ["supsub", 588], ["ab", 608], ["Aup", 629], ["Adn", 650], ["align", 668], ["drop", 682], ["cols", 698], ["drop", 711], ["Acol", 730], ["drop", 745]];
const ROW2D: Item[] = [["grip", 768], ["M", 782], ["MX", 802], ["sep", 817], ["ud", 831], ["lr", 851], ["sep", 866], ["lock", 880]];
const ROW2E: Item[] = [["grip", 908], ["fillc", 920], ["drop", 938], ["pat", 955], ["drop", 972], ["penc", 990], ["drop", 1005], ["sun", 1020], ["combo", 1060, 52, "——"], ["combo-dim", 1118, 54, "0"], ["combo-dim", 1170, 37, ""], ["combo-dim", 1226, 53, "0"]];
const LEFT1: Item[] = [["grip", 98], ["arrow", 112], ["zoomin", 132], ["zoomout", 154], ["cross*", 173], ["target+", 194], ["updn", 215], ["ell+", 236], ["fit+", 256], ["pts", 277], ["T", 297], ["rs", 319], ["arrowup+", 339], ["line+", 360], ["rect+", 380], ["hand", 401], ["sqrt+", 421], ["gred+", 441], ["mask", 461], ["sheet", 482], ["tri", 499]];
const LEFT2: Item[] = [["grip", 510], ["rainbow", 525], ["ring", 546], ["bc", 566], ["bracket", 587], ["dots", 607], ["clock", 627], ["tri", 654]];
const BOT1: Item[] = [["grip", 60], ["line", 73], ["drop", 87], ["scat", 103], ["drop", 117], ["lsym", 133], ["drop", 146], ["col", 161], ["drop", 175], ["xyline", 191], ["drop", 204], ["box", 220], ["drop", 233], ["area", 249], ["drop", 262], ["ror", 277], ["drop", 291], ["cand", 306], ["drop", 320], ["plane", 336]];
const BOT2: Item[] = [["grip", 362], ["plane", 378], ["drop", 391], ["sep", 403], ["cube", 415], ["drop", 428], ["cube", 442], ["drop", 456], ["wall", 473], ["drop", 486], ["walls", 502], ["drop", 515], ["sq", 531]];
const BOT3: Item[] = [["grip", 558], ["face", 573], ["face", 594], ["sep", 608], ["face2", 621], ["drop", 634], ["red1", 644], ["sep", 654], ["red2", 660], ["red3", 690]];
const BOT4: Item[] = [["grip", 718], ["rot", 734], ["rot", 754], ["rot", 773], ["rot", 795], ["trap", 815], ["trapd", 836], ["stack", 856], ["stack2", 877], ["focus", 898], ["cube", 918], ["stack2", 940], ["combo-dim", 978, 52, "10"]];
const RIGHT1: Item[] = [["grip", 98], ["layers*", 113], ["axr", 133], ["axk", 153], ["axrk", 173], ["swap", 194], ["runfast*", 215], ["sep", 230], ["lay1", 243], ["lay2", 264], ["lay3", 284], ["lay4", 304], ["sep", 318], ["ax1", 333], ["ax2", 354], ["ax3", 375], ["ax4", 395], ["ax5", 415], ["ax6", 434], ["tri0", 453]];
const RIGHT2: Item[] = [["grip", 464], ["al1", 478], ["al2", 498], ["sep", 512], ["al3", 525], ["al4", 546], ["sep", 559], ["al5", 572], ["al6", 595], ["sep", 610], ["al7", 625], ["sep", 640], ["tri0", 657]];

const MENU = ["File", "Edit", "View", "Graph", "Format", "Insert", "Data", "Analysis", "Gadgets", "Tools", "Preferences", "Connectivity", "Window", "Help"];
const UNDER: Record<string, number> = { Format: 1, Gadgets: 6, Tools: 0 };

function OriginLogo({ size, id }: { size: number; id: string }) {
  return (
    <svg width={size} height={size} viewBox="0 0 28 28">
      <defs>
        <radialGradient id={id} cx="0.4" cy="0.35" r="0.75">
          <stop offset="0" stopColor="#f8cdb8" />
          <stop offset="0.7" stopColor="#ec8d70" />
          <stop offset="1" stopColor="#d85c42" />
        </radialGradient>
      </defs>
      <circle cx="14" cy="14" r="13.5" fill={`url(#${id})`} />
      <path d="M7 22Q10 20 11 13Q12 7 15 10Q17 13 22 7" fill="none" stroke="#7a3a30" strokeWidth="1.2" strokeDasharray="3 1" />
    </svg>
  );
}

function PanelHead({ title }: { title: string }) {
  return (
    <div className="flex h-[17px] shrink-0 items-center justify-between rounded-t-[2px] bg-[#d7e2ec] pl-[4px] pr-[3px] font-['Roboto',sans-serif] text-[11.5px] text-[#555]">
      <span>{title}</span>
      <div className="flex items-center gap-[7px]">
        <Drop color="#111" />
        <svg width="9" height="11" viewBox="0 0 9 11"><path d="M2 1H7V6H2ZM1 6.5H8M4.5 7V11" fill="none" stroke="#222" /></svg>
        <svg width="9" height="9" viewBox="0 0 9 9"><path d="M1 1L8 8M8 1L1 8" stroke="#111" strokeWidth="1.6" /></svg>
      </div>
    </div>
  );
}

function Check() {
  return (
    <svg width="12" height="12" viewBox="0 0 12 12" className="shrink-0">
      <rect x=".5" y=".5" width="11" height="11" fill="#fff" stroke="#555" />
      <path d="M2.5 6L5 9L9.5 2.5" fill="none" stroke="#333" />
    </svg>
  );
}

function AppIcon({ k }: { k: string }) {
  switch (k) {
    case "add":
      return (
        <svg width="36" height="30" viewBox="0 0 36 30">
          <rect x="4" y="1" width="26" height="26" fill="#f3f6f9" stroke="#5ea9d8" />
          <rect x="4" y="1" width="26" height="4" fill="#2a86c4" />
          <rect x="6" y="7" width="13" height="12" fill="#c8c8c8" />
          <circle cx="25" cy="21" r="8.5" fill="#dc1f26" />
          <path d="M25 16V26M20 21H30" stroke="#fff" strokeWidth="3" />
        </svg>
      );
    case "align":
      return (
        <svg width="32" height="30" viewBox="0 0 32 30">
          <path d="M2 1V27H31M2 14H30" fill="none" stroke="#aaa" />
          <path d="M8 14Q14 13 17 3Q20 13 28 14" fill="none" stroke="#3b6ec4" strokeWidth="1.3" />
          <path d="M3 26Q9 25 12 15Q15 25 19 26M9 26Q14 24 17 15Q20 24 26 26" fill="none" stroke="#dd5a5a" strokeWidth="1.3" />
          <path d="M17 3V27" stroke="#777" />
        </svg>
      );
    case "chrom":
      return (
        <svg width="32" height="28" viewBox="0 0 32 28">
          <defs>
            <linearGradient id="chromA" x1="0" y1="0" x2="1" y2="1">
              <stop offset="0" stopColor="#22dd66" />
              <stop offset="0.45" stopColor="#44ddff" />
              <stop offset="1" stopColor="#ee22cc" />
            </linearGradient>
            <linearGradient id="chromB" x1="0" y1="0" x2="1" y2="0">
              <stop offset="0.4" stopColor="#ffffff" stopOpacity="0" />
              <stop offset="0.7" stopColor="#ffdd00" stopOpacity="0.9" />
              <stop offset="1" stopColor="#ff1111" />
            </linearGradient>
          </defs>
          <path d="M3 3Q6 0 12 3L30 17L8 27Q3 15 3 3Z" fill="url(#chromA)" />
          <path d="M3 3Q6 0 12 3L30 17L8 27Q3 15 3 3Z" fill="url(#chromB)" />
          <circle cx="15" cy="13" r="2" fill="none" stroke="#555" />
        </svg>
      );
    case "fit":
      return (
        <svg width="30" height="30" viewBox="0 0 30 30">
          <rect x="1" y="1" width="28" height="28" fill="#fdf8dc" />
          <path d="M3 27H10Q12 2 13 14Q15 27 22 27H28" fill="none" stroke="#aac3a8" />
          <path d="M14 12Q18 2 20 8Q23 2 26 8" fill="none" stroke="#e6b0b0" strokeDasharray="2 1" />
        </svg>
      );
    case "maker":
      return (
        <svg width="32" height="30" viewBox="0 0 32 30">
          <path d="M3 2v3M3 8v3M3 14v3M7 2v3M7 8v3M7 14v3" stroke="#d86060" strokeWidth="2" />
          <path d="M11 2v3M11 8v3M11 14v3M15 2v3M15 8v3" stroke="#6a88c8" strokeWidth="2" />
          <rect x="15" y="21" width="5" height="8" fill="#c01616" />
          <rect x="21" y="18" width="4" height="11" fill="#2a9a3a" />
          <rect x="26" y="13" width="4" height="16" fill="#14148a" />
          <path d="M2 27L20 13" stroke="#9a8a1e" strokeWidth="5" strokeLinecap="round" />
          <path d="M24 3a6 6 0 1 0 2 10" fill="none" stroke="#9a8a1e" strokeWidth="4" />
        </svg>
      );
    case "peak":
      return (
        <svg width="30" height="30" viewBox="0 0 30 30">
          <rect width="30" height="30" fill="#c3d2e3" />
          <path d="M1 24Q5 24 8 10Q10 3 13 11Q15 15 17 11Q20 5 23 12Q25 22 29 24" fill="none" stroke="#a3262b" strokeWidth="1.5" />
          <path d="M3 24Q8 22 11 13Q14 22 19 24M9 24Q16 22 19 13Q22 22 27 24" fill="#7ed0a4" fillOpacity="0.5" stroke="#1f8a50" strokeWidth="1.3" />
          <path d="M1 24H29" stroke="#555" />
        </svg>
      );
    default:
      return (
        <svg width="22" height="20" viewBox="0 0 22 20">
          <path d="M1 4L14 0V20H1Z" fill="#fff" stroke="#f2a89a" />
          <text x="3" y="15" fontSize="10" fill="#e88a78">P</text>
          <rect x="12" y="2" width="8" height="9" fill="#e9b3a8" />
          <rect x="14" y="4" width="4" height="5" fill="#c43e2c" />
          <rect x="12" y="13" width="8" height="2" fill="#c43e2c" />
        </svg>
      );
  }
}

const APPS = [
  { k: "add", lines: ["Add Apps"], cls: "h-[71px]" },
  { k: "align", lines: ["Align Peaks"], cls: "h-[70px]" },
  { k: "chrom", lines: ["Chromaticity", "Diagram"], cls: "h-[69px]" },
  { k: "fit", lines: ["Fit", "Convolution"], cls: "h-[71px]", dim: true },
  { k: "maker", lines: ["Graph Maker"], cls: "h-[70px]" },
  { k: "peak", lines: ["Peak", "Deconvolut..."], cls: "h-[69px]" },
];

function SideTab({ label, cls }: { label: string; cls: string }) {
  return (
    <div className={`relative w-full pl-[2px] [writing-mode:vertical-rl] ${cls}`}>
      {label}
      <svg width="18" height="12" viewBox="0 0 18 12" className="absolute -bottom-[8px] left-0"><path d="M0 0L13 12" stroke="#999" fill="none" /></svg>
    </div>
  );
}

function Apps() {
  return (
    <div className="flex min-h-0 flex-1 flex-col">
      <PanelHead title="Apps" />
      <div className="flex min-h-0 flex-1 border-b border-[#888]">
        <div className="flex w-[20px] shrink-0 flex-col items-center border-r border-[#aaa] bg-[#f2f3f8] pt-[6px] text-[10.5px] text-[#444]">
          <svg width="9" height="58" viewBox="0 0 9 58" className="mb-[10px]">
            <path d="M0 1H9M0 8L4.5 2L9 8ZM0 23L4.5 17L9 23ZM0 33L9 33L4.5 39ZM0 48H9L4.5 54ZM0 55H9" fill="#222" stroke="#222" strokeWidth="0.6" />
          </svg>
          <SideTab label="All" cls="h-[26px] font-bold text-[#222]" />
          <SideTab label="Connectors" cls="h-[68px]" />
          <SideTab label="Fitting" cls="h-[46px]" />
        </div>
        <div className="min-w-0 flex-1 overflow-hidden bg-white pr-[33px] pt-[5px] text-center text-[11px] leading-[14px] text-[#444]">
          {APPS.map((a) => (
            <div key={a.k} className={`flex flex-col items-center ${a.cls} ${a.dim ? "text-[#999]" : ""}`}>
              <div className="flex h-[30px] items-end justify-center"><AppIcon k={a.k} /></div>
              <div className="mt-[3px] whitespace-nowrap">{a.lines.map((l) => <div key={l}>{l}</div>)}</div>
            </div>
          ))}
          <div className="mt-[1px] flex justify-center"><AppIcon k="ppt" /></div>
        </div>
        <div className="flex w-[18px] shrink-0 flex-col items-center justify-between bg-white pb-[4px] pt-[5px]">
          <div className="flex w-full flex-1 flex-col items-center">
            <svg width="10" height="6" viewBox="0 0 10 6"><path d="M1 5L5 1L9 5" fill="none" stroke="#555" strokeWidth="1.5" /></svg>
            <div className="mt-[4px] h-[205px] w-[14px] bg-[#cdcdcd]" />
          </div>
          <svg width="10" height="6" viewBox="0 0 10 6"><path d="M1 1L5 5L9 1" fill="none" stroke="#555" strokeWidth="1.5" /></svg>
        </div>
      </div>
    </div>
  );
}

function ObjectManager() {
  return (
    <div className="flex h-[101px] shrink-0 flex-col">
      <PanelHead title="Object Manager" />
      <div className="mt-[1px] flex min-h-0 flex-1 border-2 border-[#a3a3a3] bg-white">
        <div className="min-w-0 flex-1 overflow-hidden pl-[2px] pt-[1px] font-['Roboto',sans-serif] text-[10.5px] leading-[17px] text-[#333]">
          <div className="flex h-[16px] items-center bg-[#3a9af5] pl-[4px] text-[#d6e9ff]">
            <span className="flex h-[9px] w-[9px] items-center justify-center border border-[#888] bg-white"><span className="h-px w-[5px] bg-[#555]" /></span>
            <svg width="15" height="12" viewBox="0 0 15 12"><path d="M0 11V2H5L6 3.5H12V11Z" fill="#e0b050" /><path d="M2 5H15L12 11H0Z" fill="#f3cf7e" /></svg>
            <span>Graph4</span>
          </div>
          <div className="flex items-center gap-[2px] pl-[15px]">
            <span className="flex h-[9px] w-[9px] items-center justify-center border border-[#888]"><span className="h-px w-[5px] bg-[#555]" /></span>
            <Check />
            <span className="ml-[2px]">BottomXLeftY</span>
          </div>
          <div className="flex items-center pl-[41px]">
            <Check />
            <span className="ml-[5px] h-[9px] w-[31px] border border-[#333]" />
            <b className="ml-[5px]">y</b>
          </div>
          <div className="flex items-center pl-[41px]">
            <Check />
            <span className="h-px w-[36px] bg-[#333]" />
            <span className="ml-[3px] whitespace-nowrap">Tick Li</span>
          </div>
          <div className="flex items-center pl-[41px]">
            <Check />
            <span className="ml-[36px] whitespace-nowrap">Label F</span>
          </div>
        </div>
        <div className="flex w-[17px] shrink-0 flex-col items-center justify-between py-[3px]">
          <div className="flex w-full flex-col items-center">
            <svg width="10" height="6" viewBox="0 0 10 6"><path d="M1 5L5 1L9 5" fill="none" stroke="#555" strokeWidth="1.5" /></svg>
            <div className="mt-[3px] h-[21px] w-[14px] bg-[#cdcdcd]" />
          </div>
          <svg width="10" height="6" viewBox="0 0 10 6"><path d="M1 1L5 5L9 1" fill="none" stroke="#555" strokeWidth="1.5" /></svg>
        </div>
      </div>
    </div>
  );
}

function DataDisplay() {
  return (
    <div className="absolute left-[669px] top-[15px] h-[84px] w-[358px] border-2 border-[#a9a9a9] border-t-[#f0f0f0] bg-[#dfe6ee]">
      <div className="flex h-[19px] items-center justify-between bg-[#cbd7e2] pl-[2px] pr-[4px] font-['Roboto',sans-serif] text-[11.5px] text-[#222]">
        <span>Data Display</span>
        <div className="flex items-center gap-[8px]">
          <Drop color="#111" />
          <span className="h-[9px] w-[9px] border border-t-2 border-[#222]" />
          <svg width="9" height="9" viewBox="0 0 9 9"><path d="M1 1L8 8M8 1L1 8" stroke="#111" strokeWidth="1.5" /></svg>
        </div>
      </div>
      <div className="h-[60px] bg-black pl-[6px] pt-[1px] font-['Liberation_Sans',Arial,sans-serif] text-[21.4px] leading-[26px] text-[#22e022]">
        X = 0.293090424,Y = 0.616721311
      </div>
    </div>
  );
}

function TaskApp({ children, active, lit }: { children: ReactNode; active?: boolean; lit?: boolean }) {
  return (
    <div className={`flex h-full w-[46px] items-center justify-center border-b-2 ${active ? "border-[#76b9ed]" : "border-transparent"} ${lit ? "bg-[#3b4636]" : ""}`}>
      {children}
    </div>
  );
}

function Taskbar() {
  return (
    <div className="flex h-[37px] shrink-0 items-center bg-gradient-to-r from-[#0a0f06] via-[#101a0a] to-[#030303] text-white">
      <div className="flex h-full w-[45px] items-center justify-center">
        <svg width="18" height="18" viewBox="0 0 18 18"><path d="M0 2.5L7.5 1.4V8.5H0ZM8.5 1.3L18 0V8.5H8.5ZM0 9.5H7.5V16.6L0 15.5ZM8.5 9.5H18V18L8.5 16.7Z" fill="#fff" /></svg>
      </div>
      <div className="flex h-full w-[46px] items-center justify-center">
        <svg width="18" height="18" viewBox="0 0 18 18"><circle cx="10.5" cy="7" r="5.5" fill="none" stroke="#ddd" strokeWidth="1.3" /><path d="M6.5 11L1.5 17" stroke="#ddd" strokeWidth="1.4" /></svg>
      </div>
      <div className="flex h-full w-[46px] items-center justify-center">
        <svg width="20" height="16" viewBox="0 0 20 16"><rect x="5" y="1" width="10" height="14" fill="none" stroke="#ccc" /><path d="M1 3V13M19 3V13" stroke="#ccc" /></svg>
      </div>
      <TaskApp active><svg width="22" height="20" viewBox="0 0 22 20"><path d="M1 2H9L11 5H21V19H1Z" fill="#f2c64c" /><path d="M1 7H21V19H1Z" fill="#f8d980" /><rect x="6" y="12" width="10" height="7" fill="#3aa7dc" /></svg></TaskApp>
      <TaskApp><svg width="24" height="24" viewBox="0 0 24 24"><defs><linearGradient id="edg" x1="0" y1="0" x2="1" y2="1"><stop offset="0" stopColor="#2ec4d8" /><stop offset="1" stopColor="#1462b8" /></linearGradient></defs><circle cx="12" cy="12" r="11" fill="url(#edg)" /><path d="M12 8Q22 6 22 14Q18 11 13 12Q9 15 13 20Q7 20 6 14Q6 9 12 8Z" fill="#062a50" /><path d="M5 8Q11 2 21 8Q15 5 8 10Z" fill="#6fe28e" /></svg></TaskApp>
      <TaskApp active><svg width="22" height="22" viewBox="0 0 22 22"><rect x="5" y="1" width="16" height="20" fill="#e8eef7" /><path d="M8 5H19M8 9H19M8 13H19M8 17H19" stroke="#8aa7d6" /><rect x="1" y="5" width="12" height="12" fill="#2b5dab" /><text x="7" y="15" textAnchor="middle" fontSize="10" fontWeight="700" fill="#fff">W</text></svg></TaskApp>
      <TaskApp><svg width="22" height="22" viewBox="0 0 22 22"><rect x="5" y="1" width="16" height="20" fill="#f5d5c6" /><circle cx="15" cy="10" r="4.5" fill="#e3784f" /><rect x="1" y="5" width="12" height="12" fill="#d2522c" /><text x="7" y="15" textAnchor="middle" fontSize="10" fontWeight="700" fill="#fff">P</text></svg></TaskApp>
      <TaskApp><svg width="22" height="22" viewBox="0 0 22 22"><rect x="5" y="1" width="16" height="20" fill="#dcefdc" /><path d="M13 5H19M13 9H19M13 13H19M13 17H19" stroke="#2d8a50" /><rect x="1" y="5" width="12" height="12" fill="#24804a" /><text x="7" y="15" textAnchor="middle" fontSize="10" fontWeight="700" fill="#fff">X</text></svg></TaskApp>
      <TaskApp active><svg width="22" height="22" viewBox="0 0 22 22"><circle cx="11" cy="11" r="10" fill="#2a2a2a" stroke="#bbb" strokeWidth="1.4" /><circle cx="11" cy="6.5" r="2.8" fill="none" stroke="#ddd" strokeWidth="1.2" /><circle cx="6.8" cy="13.8" r="2.8" fill="none" stroke="#ddd" strokeWidth="1.2" /><circle cx="15.2" cy="13.8" r="2.8" fill="none" stroke="#ddd" strokeWidth="1.2" /></svg></TaskApp>
      <TaskApp active lit>
        <div className="relative h-[24px] w-[24px]">
          <div className="absolute left-[5px] top-0 h-[16px] w-[17px] bg-[#d3dae6]" />
          <div className="absolute left-[1px] top-[4px]"><OriginLogo size={20} id="taskLogo" /></div>
        </div>
      </TaskApp>
      <TaskApp active><svg width="24" height="24" viewBox="0 0 24 24"><circle cx="12" cy="13" r="10" fill="#f0701e" /><path d="M4 9Q6 3 13 1Q11 5 15 6Q21 8 21 14Q16 8 10 10Z" fill="#ffb21e" /><circle cx="12" cy="14" r="5.5" fill="#5b2fb0" /><path d="M5 15Q9 11 10 9Q9 18 17 18Q11 23 5 15Z" fill="#f04a1e" /></svg></TaskApp>
      <div className="flex-1" />
      <div className="flex items-center text-[#e4e4e4]">
        <svg width="12" height="8" viewBox="0 0 12 8" className="mr-[9px]"><path d="M1 7L6 1.5L11 7" fill="none" stroke="#ddd" strokeWidth="1.2" /></svg>
        <svg width="16" height="12" viewBox="0 0 16 12" className="mr-[7px]"><rect x="3" y="3" width="12" height="8" fill="#ccc" /><path d="M0 2L4 0" stroke="#ddd" /></svg>
        <svg width="16" height="16" viewBox="0 0 16 16" className="mr-[7px]"><path d="M7 1H9V6L15 9V11L9 9.5V13L11 15H5L7 13V9.5L1 11V9L7 6Z" fill="none" stroke="#ddd" /></svg>
        <svg width="15" height="13" viewBox="0 0 15 13" className="mr-[8px]"><path d="M1 4.5H3.5L7 1.5V11.5L3.5 8.5H1ZM10 4.5L14 8.5M14 4.5L10 8.5" fill="none" stroke="#ddd" /></svg>
        <svg width="15" height="17" viewBox="0 0 15 17" className="mr-[8px]"><path d="M1 1H14V13H10L7.5 16L5 13H1ZM4 5H11M4 8H11" fill="none" stroke="#ddd" /></svg>
        <div className="w-[70px] text-center font-['Noto_Sans',sans-serif] text-[11px] leading-[16px]">
          <div>6:38 PM</div>
          <div>1/25/2021</div>
        </div>
        <div className="w-[2px]" />
      </div>
    </div>
  );
}

export default function App() {
  return (
    <div className="flex h-[720px] w-[1280px] flex-col overflow-hidden bg-white font-['Noto_Sans',sans-serif] text-[#333]">
      {/* title bar */}
      <div className="flex h-[22px] shrink-0 items-center bg-white">
        <div className="ml-[3px] mr-[3px]"><OriginLogo size={16} id="titleLogo" /></div>
        <span className="text-[12px] text-[#222]">PL.opju - C:\Users\sanjeet\Desktop\PL\ - /Folder1/ - OriginPro 2019b 64-bit</span>
        <div className="flex-1" />
        <div className="flex items-center">
          <span className="h-px w-[10px] bg-[#444]" />
          <svg width="11" height="11" viewBox="0 0 11 11" className="ml-[32px]"><path d="M0.5 3H8V10.5H0.5ZM3 3V0.5H10.5V8H8" fill="none" stroke="#333" /></svg>
          <svg width="12" height="12" viewBox="0 0 12 12" className="ml-[31px] mr-[18px]"><path d="M1 1L11 11M11 1L1 11" stroke="#333" /></svg>
        </div>
      </div>

      {/* menu bar */}
      <div className="flex h-[22px] shrink-0 items-center bg-gradient-to-b from-[#f7f8fb] to-[#f1f2f9] font-['Roboto',sans-serif] text-[10.5px] text-[#444]">
        <div className="ml-[5px]"><Grip /></div>
        <div className="ml-[3px] mr-[4px]">
          <svg width="16" height="16" viewBox="0 0 16 16"><rect x="1" y="1" width="14" height="14" fill="#3c9a9a" stroke="#446" /><rect x="3" y="3" width="10" height="3" fill="#88d" /><path d="M3 8H13M3 11H13" stroke="#dfe" /></svg>
        </div>
        <div className="flex gap-[15px]">
          {MENU.map((m) => {
            const u = UNDER[m] ?? 0;
            return (
              <span key={m}>
                {m.slice(0, u)}
                <span className="underline">{m[u]}</span>
                {m.slice(u + 1)}
              </span>
            );
          })}
        </div>
        <div className="flex-1" />
        <div className="mr-[4px] flex items-center gap-[7px]">
          <span className="h-[2px] w-[6px] bg-[#222]" />
          <svg width="9" height="9" viewBox="0 0 9 9"><path d="M0.5 3H6.5V8.5H0.5ZM2.5 3V0.5H8.5V6H6.5" fill="none" stroke="#222" /></svg>
          <svg width="9" height="9" viewBox="0 0 9 9"><path d="M1 1L8 8M8 1L1 8" stroke="#222" strokeWidth="1.6" /></svg>
        </div>
      </div>

      {/* toolbars */}
      <div className="flex h-[25px] shrink-0 items-center bg-[#f1f2f9]">
        <Pill className="w-[727px]" origin={0} items={ROW1A} />
        <Pill className="w-[246px]" origin={727} items={ROW1B} />
        <Pill className="w-[247px]" origin={973} items={ROW1C} />
        <Pill className="ml-[1px] w-[60px]" origin={1221} items={[["grip", 1224], ["dot", 1238]]} />
      </div>
      <div className="flex h-[25px] shrink-0 items-center bg-[#f1f2f9]">
        <Pill className="w-[84px]" origin={0} items={ROW2A} />
        <Pill className="w-[202px]" origin={84} items={ROW2B} />
        <Pill className="w-[477px]" origin={286} items={ROW2C} />
        <Pill className="w-[140px]" origin={763} items={ROW2D} />
        <Pill className="w-[377px]" origin={903} items={ROW2E} />
      </div>

      {/* body */}
      <div className="flex min-h-0 flex-1 bg-[#f1f2f9]">
        <div className="flex w-[57px] shrink-0">
          <div className="flex w-[23px] shrink-0 flex-col pt-[3px] text-[11px] text-[#888]">
            <div className="h-[123px] w-[22px] border-b border-[#e0e0e6] bg-[#f0f0f0] pr-[6px] [writing-mode:vertical-rl]">Project Explorer (1)</div>
            <div className="h-[115px] w-[22px] border-b border-[#e0e0e6] bg-[#f0f0f0] pr-[6px] pt-[17px] [writing-mode:vertical-rl]">Messages Log</div>
            <div className="h-[130px] w-[22px] border-b border-[#e0e0e6] bg-[#f0f0f0] pr-[6px] pt-[17px] [writing-mode:vertical-rl]">Smart-Hint Log (1)</div>
          </div>
          <div className="flex w-[34px] flex-col">
            <div className="h-[408px] w-[31px] rounded-b-[4px] bg-gradient-to-r from-[#f7f7fb] to-[#c8c9d8]">
              <div className="-ml-[1px] w-[22px]"><Strip vertical origin={94} items={LEFT1} /></div>
            </div>
            <div className="mt-[3px] h-[155px] w-[28px] rounded-[4px] bg-gradient-to-r from-[#f7f7fb] to-[#c8c9d8]">
              <div className="-ml-[1px] w-[22px]"><Strip vertical origin={505} items={LEFT2} /></div>
            </div>
          </div>
        </div>

        <div className="flex min-w-0 flex-1 flex-col">
          <div className="relative flex h-[544px] shrink-0 border-t-2 border-[#a8a8a8]">
            <div className="relative h-full w-[701px] shrink-0 bg-white">
              <Chart />
              <div className="absolute left-0 top-0 flex h-[18px] w-[18px] items-center justify-center bg-[#d4d4d4] font-['Liberation_Sans',sans-serif] text-[11px] font-bold text-[#111]">1</div>
              <button className="absolute left-[481px] top-[505px] flex h-[20px] w-[207px] items-center justify-center rounded-[2px] border border-[#999] bg-[#e2e2e2] font-['Liberation_Sans',sans-serif] text-[14px] font-bold text-[#e8212c]">
                Show/Hide Color Temperature
              </button>
            </div>
            <div className="flex-1 bg-[#c0c0c0]" />
            <DataDisplay />
            <svg width="24" height="24" viewBox="0 0 24 24" className="absolute left-[833px] top-[119px]">
              <path d="M12 0V24M0 12H24" stroke="#333" />
              <circle cx="12" cy="12" r="4" fill="none" stroke="#333" />
            </svg>
          </div>
          <div className="flex h-[25px] shrink-0 items-center bg-[#f1f2f9]">
            <Pill className="w-[301px]" origin={57} items={BOT1} />
            <Pill className="w-[197px]" origin={358} items={BOT2} />
            <Pill className="w-[157px]" origin={555} items={BOT3} />
            <Pill className="w-[309px]" origin={712} items={BOT4} />
          </div>
        </div>

        <div className="flex w-[173px] shrink-0">
          <div className="flex w-[30px] shrink-0 flex-col items-center pl-[3px] pr-[4px]">
            <div className="h-[362px] w-[23px] rounded-b-[4px] bg-gradient-to-r from-[#fbfbfd] to-[#cfd0de]">
              <Strip vertical origin={94} items={RIGHT1} />
            </div>
            <div className="mt-[6px] h-[200px] w-[23px] rounded-[4px] bg-gradient-to-r from-[#fbfbfd] to-[#cfd0de]">
              <Strip vertical origin={462} items={RIGHT2} />
            </div>
          </div>
          <div className="flex min-w-0 flex-1 flex-col gap-[6px]">
            <ObjectManager />
            <Apps />
          </div>
        </div>
      </div>

      {/* status bar */}
      <div className="relative flex h-[20px] shrink-0 items-center bg-[#f0f0f0] font-['Roboto',sans-serif] text-[10.5px] text-[#333]">
        <div className="absolute -top-[9px] left-[2px]"><OriginLogo size={27} id="startLogo" /></div>
        <span className="ml-[33px]">&lt;&lt; Start menu (F1)</span>
        <div className="flex-1" />
        <span>--</span>
        <svg width="10" height="9" viewBox="0 0 10 9" className="ml-[7px]"><path d="M1 0H10V6H2V9H1Z" fill="#d11" /></svg>
        <span className="ml-[13px]">AU : ON</span>
        <span className="ml-[6px]">Light Grids</span>
        <span className="ml-[8px]">1:[Book3]Boundary!Col("y")[1:471]</span>
        <span className="ml-[7px]">1:[Graph4]BottomXLeftY!1</span>
        <span className="ml-[5px] mr-[2px]">Radian</span>
      </div>

      <Taskbar />
    </div>
  );
}
